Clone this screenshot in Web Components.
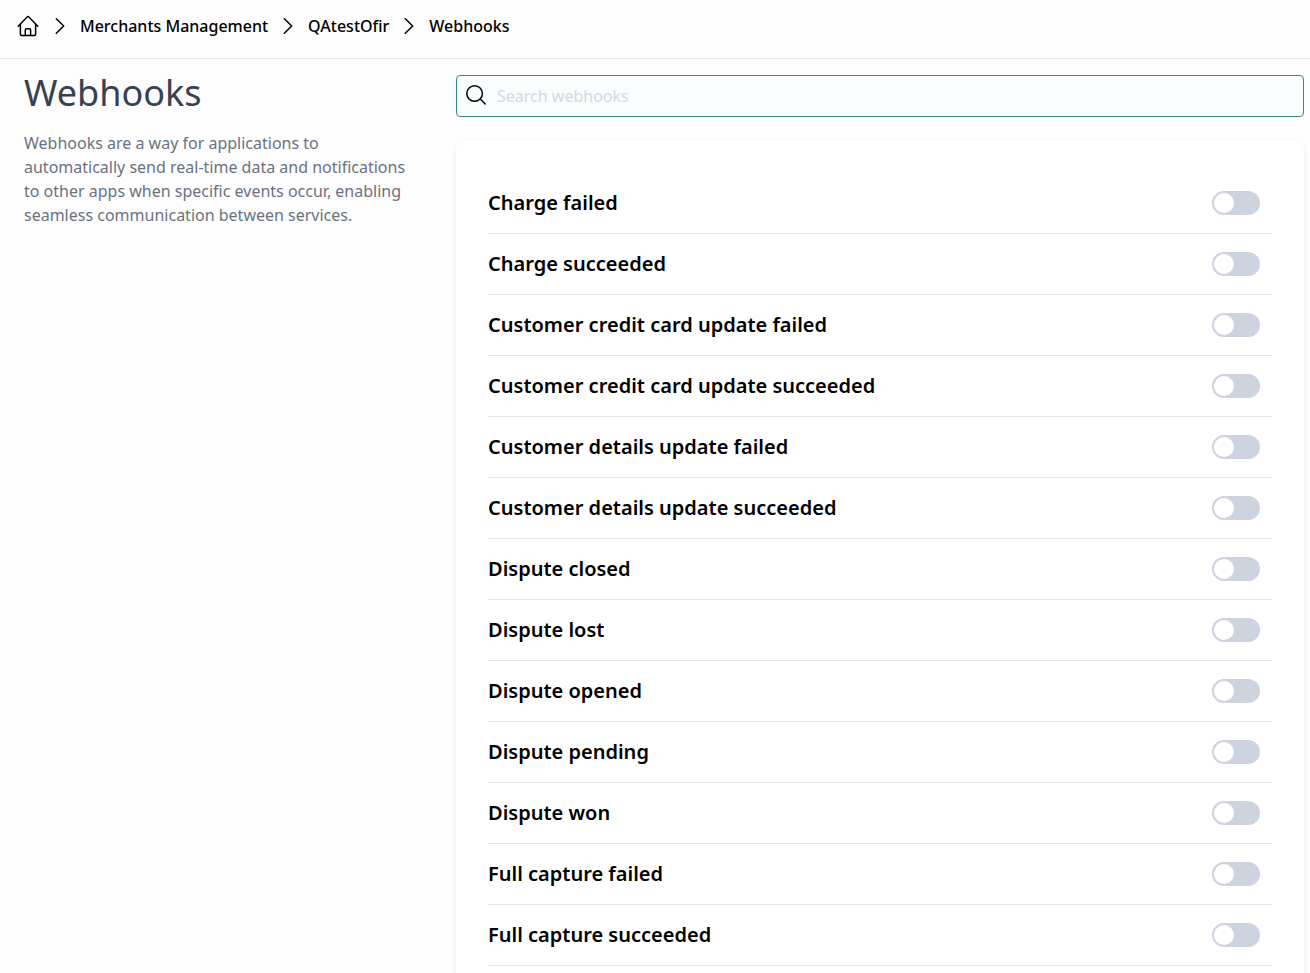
<!DOCTYPE html>
<html lang="en">
<head>
<meta charset="utf-8">
<meta name="viewport" content="width=device-width, initial-scale=1">
<title>Webhooks</title>
<style>
  body {
    margin: 0;
    background: #fdfdfd;
    color: #000;
    font-family: "Noto Sans", "Open Sans", sans-serif;
    font-size: 16px;
    line-height: 24px;
  }
</style>
</head>
<body>
<webhooks-page></webhooks-page>

<script>
const define = (name, html, setup) => {
  const template = document.createElement('template');
  template.innerHTML = html;
  customElements.define(name, class extends HTMLElement {
    constructor() {
      super();
      this.attachShadow({ mode: 'open' }).append(template.content.cloneNode(true));
    }
    connectedCallback() {
      if (setup) setup(this, this.shadowRoot);
    }
  });
};

define('crumb-link', `
  <style>
    :host { display: flex; align-items: center; gap: 14px; }
    svg { display: block; width: 12px; height: 20px; }
    a { color: inherit; text-decoration: none; font-weight: 500; white-space: nowrap; }
  </style>
  <svg viewBox="0 0 12 20" fill="none" stroke="#000" stroke-width="1.5" stroke-linecap="round" stroke-linejoin="round" aria-hidden="true"><path d="M2.3 2.7 9.7 10 2.3 17.3"/></svg>
  <a href="#"><slot></slot></a>
`, (host, root) => {
  if (host.hasAttribute('current')) root.querySelector('a').setAttribute('aria-current', 'page');
});

define('bread-crumbs', `
  <style>
    :host { display: block; border-bottom: 1px solid #e5e7eb; }
    nav { display: flex; align-items: center; gap: 14px; height: 52px; padding: 0 16px 6px; }
    .home, svg { display: block; }
    svg { width: 24px; height: 24px; }
  </style>
  <nav aria-label="Breadcrumb">
    <a class="home" href="#" aria-label="Home">
      <svg viewBox="0 0 24 24" fill="none" stroke="#000" stroke-width="1.5" stroke-linecap="round" stroke-linejoin="round"><path d="m2.2 12.2 8.9-9.3a1.2 1.2 0 0 1 1.8 0l8.9 9.3M4.4 10v10.2c0 .7.5 1.2 1.2 1.2h12.8c.7 0 1.2-.5 1.2-1.2V10M9.3 21.2v-5.3c0-.7.5-1.2 1.2-1.2h2.9c.7 0 1.2.5 1.2 1.2v5.3"/></svg>
    </a>
    <slot></slot>
  </nav>
`);

define('page-intro', `
  <style>
    :host { display: block; padding-right: 24px; }
    h1 { margin: 0; font-size: 36px; line-height: 36px; font-weight: 400; color: #374151; }
    p { margin: 20px 0 0; color: #6b7280; }
  </style>
  <h1><slot name="title"></slot></h1>
  <p><slot></slot></p>
`);

define('search-field', `
  <style>
    :host { display: block; }
    label {
      display: flex; align-items: center; gap: 8px; box-sizing: border-box; height: 42px; padding: 0 8px;
      border: 1px solid #38888a; border-radius: 4px; background: #f9fdfe;
    }
    svg { flex: none; display: block; width: 24px; height: 24px; }
    input {
      flex: 1; min-width: 0; padding: 0; border: 0; outline: 0; background: none;
      font: inherit; color: #000;
    }
    input::placeholder { color: #d5d9da; opacity: 1; }
  </style>
  <label>
    <svg viewBox="0 0 24 24" fill="none" stroke="#000" stroke-width="1.5" stroke-linecap="round" aria-hidden="true"><circle cx="9.6" cy="9.5" r="7.8"/><path d="m15.2 15 5 5"/></svg>
    <input type="search" aria-label="Search webhooks" placeholder="Search webhooks">
  </label>
`);

define('webhook-toggle', `
  <style>
    :host { display: block; border-bottom: 1px solid #e5e7eb; }
    label { display: flex; align-items: center; justify-content: space-between; gap: 16px; height: 60px; padding-right: 12px; }
    span { font-size: 20px; line-height: 28px; font-weight: 600; }
    input {
      appearance: none; flex: none; display: flex; box-sizing: border-box; width: 48px; height: 24px;
      margin: 0; padding: 2px; border-radius: 12px; background: #cdd3df; cursor: pointer;
    }
    input::before { content: ""; width: 20px; height: 20px; border-radius: 50%; background: #fff; }
    input:checked { justify-content: flex-end; background: #38888a; }
  </style>
  <label><span><slot></slot></span><input type="checkbox" role="switch"></label>
`);

define('content-card', `
  <style>
    :host {
      display: block; padding: 32px; border-radius: 8px; background: #fff;
      box-shadow: 0 4px 6px -1px rgba(0, 0, 0, .07), 0 0 2px rgba(0, 0, 0, .07);
    }
  </style>
  <slot></slot>
`);

define('webhooks-page', `
  <style>
    :host { display: flex; flex-direction: column; height: 100vh; }
    bread-crumbs { flex: none; }
    main {
      flex: 1; min-height: 0; overflow-y: auto; scrollbar-width: none;
      display: grid; grid-template-columns: repeat(3, minmax(0, 1fr)); column-gap: 16px; align-items: start;
      padding: 16px 6px 24px 24px;
    }
    section { grid-column: span 2; display: grid; gap: 24px; }
  </style>
  <bread-crumbs>
    <crumb-link>Merchants Management</crumb-link>
    <crumb-link>QAtestOfir</crumb-link>
    <crumb-link current>Webhooks</crumb-link>
  </bread-crumbs>
  <main>
    <page-intro>
      <span slot="title">Webhooks</span>
      Webhooks are a way for applications to automatically send real-time data and notifications to other apps when specific events occur, enabling seamless communication between services.
    </page-intro>
    <section aria-label="Webhook events">
      <search-field></search-field>
      <content-card>
        <webhook-toggle>Charge failed</webhook-toggle>
        <webhook-toggle>Charge succeeded</webhook-toggle>
        <webhook-toggle>Customer credit card update failed</webhook-toggle>
        <webhook-toggle>Customer credit card update succeeded</webhook-toggle>
        <webhook-toggle>Customer details update failed</webhook-toggle>
        <webhook-toggle>Customer details update succeeded</webhook-toggle>
        <webhook-toggle>Dispute closed</webhook-toggle>
        <webhook-toggle>Dispute lost</webhook-toggle>
        <webhook-toggle>Dispute opened</webhook-toggle>
        <webhook-toggle>Dispute pending</webhook-toggle>
        <webhook-toggle>Dispute won</webhook-toggle>
        <webhook-toggle>Full capture failed</webhook-toggle>
        <webhook-toggle>Full capture succeeded</webhook-toggle>
      </content-card>
    </section>
  </main>
</webhooks-page>
`);
</script>
</body>
</html>
